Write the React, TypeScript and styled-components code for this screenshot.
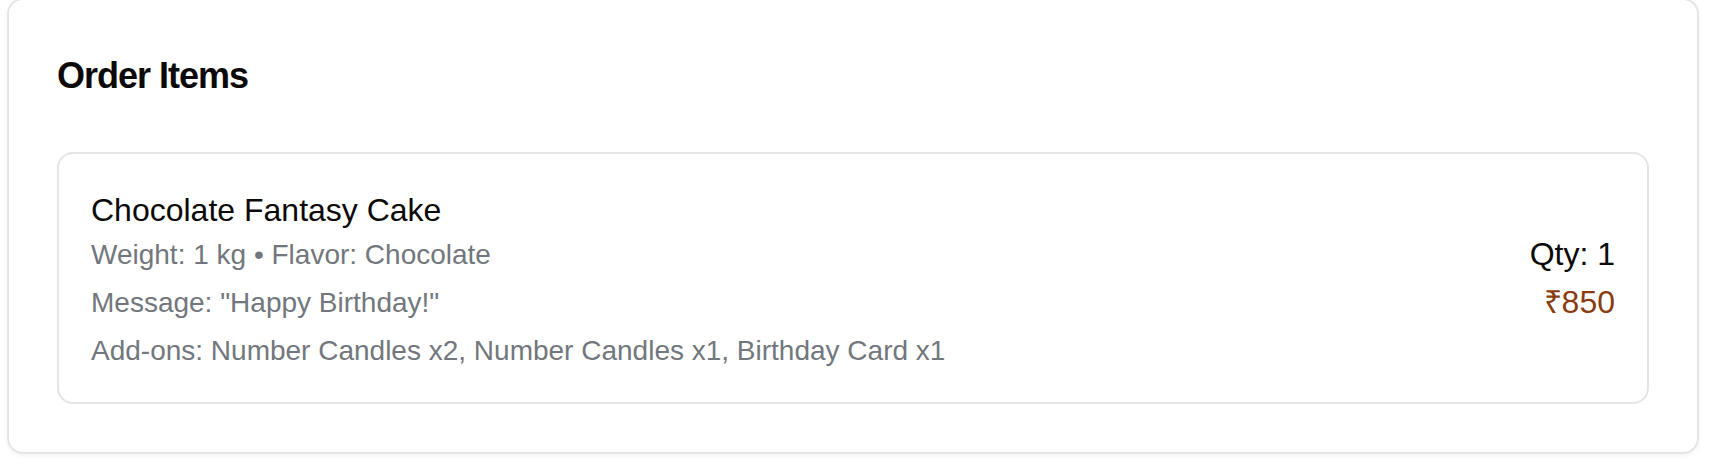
import React from "react";
import styled, { createGlobalStyle } from "styled-components";

const GlobalStyle = createGlobalStyle`
  *, *::before, *::after { box-sizing: border-box; }
  body {
    margin: 0;
    background: #ffffff;
    color: #0c0a09;
    font-family: "Liberation Sans", Arial, Helvetica, sans-serif;
  }
  h2, h3, p { margin: 0; }
`;

const Page = styled.main`
  padding: 0 23px 10px 7px;
  overflow: hidden;
`;

const Card = styled.section`
  margin-top: -2px;
  padding: 48px;
  border: 2px solid #e5e5e5;
  border-radius: 16px;
  box-shadow: 0 2px 4px rgba(0, 0, 0, 0.05);
`;

const CardTitle = styled.h2`
  margin-bottom: 48px;
  font-size: 36px;
  line-height: 56px;
  font-weight: 700;
  letter-spacing: -1px;
`;

const ItemList = styled.ul`
  margin: 0;
  padding: 0;
  list-style: none;
`;

const Item = styled.li`
  display: flex;
  align-items: center;
  justify-content: space-between;
  gap: 32px;
  padding: 32px;
  border: 2px solid #e5e5e5;
  border-radius: 16px;
`;

const ItemName = styled.h3`
  font-size: 32px;
  line-height: 48px;
  font-weight: 400;
`;

const DetailList = styled.div`
  display: flex;
  flex-direction: column;
  padding-top: 1px;
  font-size: 28px;
  line-height: 40px;
  color: #72777d;
  gap: 8px;
  margin-bottom: -1px;
`;

const Summary = styled.div`
  text-align: right;
  font-size: 32px;
  line-height: 48px;
`;

const Price = styled.p`
  color: #8a3c10;
`;

const items = [
  {
    name: "Chocolate Fantasy Cake",
    details: [
      "Weight: 1 kg • Flavor: Chocolate",
      'Message: "Happy Birthday!"',
      "Add-ons: Number Candles x2, Number Candles x1, Birthday Card x1",
    ],
    quantity: 1,
    price: "₹850",
  },
];

export default function App() {
  return (
    <>
      <GlobalStyle />
      <Page>
        <Card>
          <CardTitle>Order Items</CardTitle>
          <ItemList>
            {items.map((item) => (
              <Item key={item.name}>
                <div>
                  <ItemName>{item.name}</ItemName>
                  <DetailList>
                    {item.details.map((detail) => (
                      <p key={detail}>{detail}</p>
                    ))}
                  </DetailList>
                </div>
                <Summary>
                  <p>Qty: {item.quantity}</p>
                  <Price>{item.price}</Price>
                </Summary>
              </Item>
            ))}
          </ItemList>
        </Card>
      </Page>
    </>
  );
}
